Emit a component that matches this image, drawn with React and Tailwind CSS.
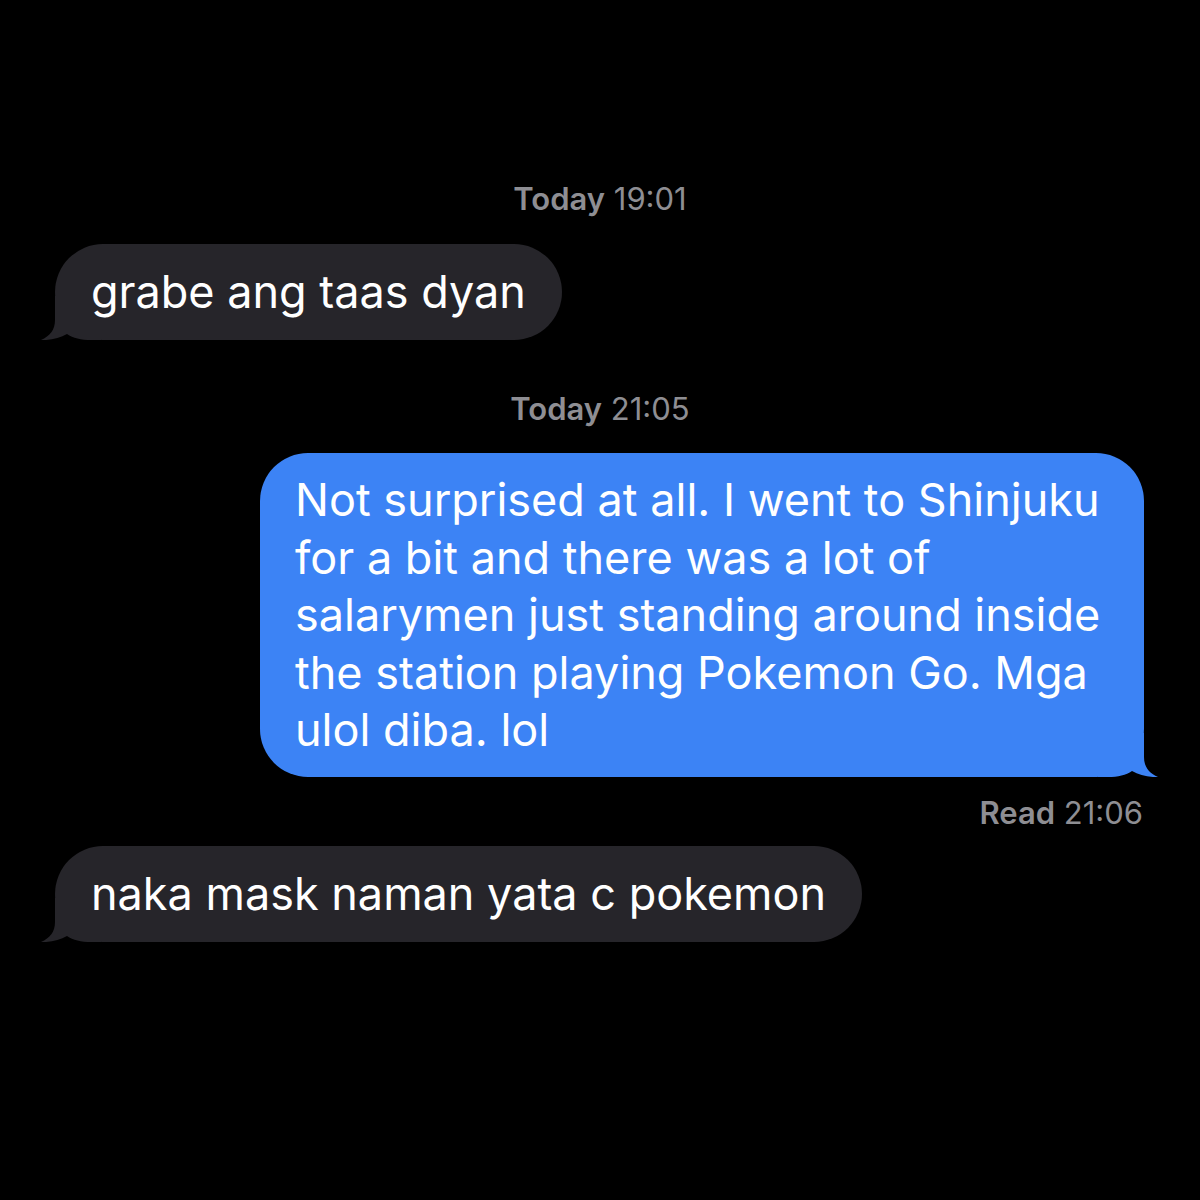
import React from "react";

const font = { fontFamily: "Inter, 'Noto Sans', sans-serif" };

function Tail({ color, side }) {
  // little hook at the bottom corner of a bubble
  const pos = side === "left" ? "-left-[14px]" : "-right-[14px] -scale-x-100";
  return (
    <svg
      className={`absolute bottom-0 ${pos}`}
      width="60"
      height="44"
      viewBox="0 0 60 44"
    >
      <path
        d="M14 0 L14 24 C14 34 9 40 0 44 C10 44.5 19 42 26 38 C32 42 40 44 50 44 L60 44 L60 0 Z"
        fill={color}
      />
    </svg>
  );
}

function Stamp({ label, time, align = "center" }) {
  return (
    <div
      className={`text-[31px] leading-[37px] text-[#8e8e93] ${
        align === "center" ? "text-center" : "text-right pr-[57px]"
      }`}
    >
      <span className="font-semibold">{label}</span> {time}
    </div>
  );
}

function Incoming({ children }) {
  return (
    <div className="pl-[55px]">
      <div className="relative inline-block rounded-[48px] bg-[#26252a] px-[36px] py-[19px] text-[45px] leading-[58px] text-white">
        <Tail color="#26252a" side="left" />
        <span className="relative">{children}</span>
      </div>
    </div>
  );
}

export default function App() {
  return (
    <div className="min-h-[1200px] w-[1200px] bg-black pt-[180px]" style={font}>
      <Stamp label="Today" time="19:01" />
      <div className="mt-[27px]">
        <Incoming>grabe ang taas dyan</Incoming>
      </div>

      <div className="mt-[50px]">
        <Stamp label="Today" time="21:05" />
      </div>

      <div className="mt-[26px] flex justify-end pr-[56px]">
        <div className="relative w-[884px] rounded-[48px] bg-[#3c83f5] px-[35px] py-[18px] text-[45px] leading-[57.5px] text-white">
          <Tail color="#3c83f5" side="right" />
          <p className="relative">
            Not surprised at all. I went to Shinjuku
            <br />
            for a bit and there was a lot of
            <br />
            salarymen just standing around inside
            <br />
            the station playing Pokemon Go. Mga
            <br />
            ulol diba. lol
          </p>
        </div>
      </div>

      <div className="mt-[17px]">
        <Stamp label="Read" time="21:06" align="right" />
      </div>

      <div className="mt-[15px]">
        <Incoming>naka mask naman yata c pokemon</Incoming>
      </div>
    </div>
  );
}
